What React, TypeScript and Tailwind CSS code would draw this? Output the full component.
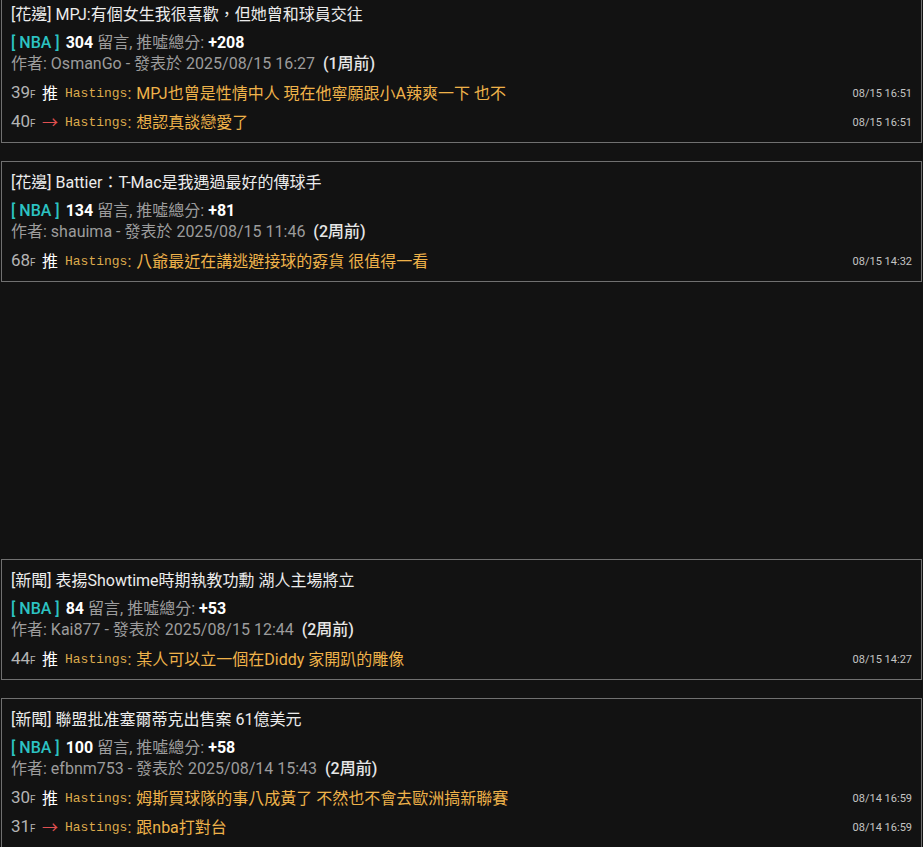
type Push = { floor: number; tag: "推" | "→"; user: string; text: string; time: string };
type Post = {
  title: string;
  board: string;
  count: number;
  score: string;
  author: string;
  date: string;
  ago: string;
  pushes: Push[];
};

const posts: Post[] = [
  {
    title: "[花邊] MPJ:有個女生我很喜歡，但她曾和球員交往",
    board: "NBA",
    count: 304,
    score: "+208",
    author: "OsmanGo",
    date: "2025/08/15 16:27",
    ago: "(1周前)",
    pushes: [
      { floor: 39, tag: "推", user: "Hastings", text: "MPJ也曾是性情中人 現在他寧願跟小A辣爽一下 也不", time: "08/15 16:51" },
      { floor: 40, tag: "→", user: "Hastings", text: "想認真談戀愛了", time: "08/15 16:51" },
    ],
  },
  {
    title: "[花邊] Battier：T-Mac是我遇過最好的傳球手",
    board: "NBA",
    count: 134,
    score: "+81",
    author: "shauima",
    date: "2025/08/15 11:46",
    ago: "(2周前)",
    pushes: [{ floor: 68, tag: "推", user: "Hastings", text: "八爺最近在講逃避接球的孬貨 很值得一看", time: "08/15 14:32" }],
  },
  {
    title: "[新聞] 表揚Showtime時期執教功勳 湖人主場將立",
    board: "NBA",
    count: 84,
    score: "+53",
    author: "Kai877",
    date: "2025/08/15 12:44",
    ago: "(2周前)",
    pushes: [{ floor: 44, tag: "推", user: "Hastings", text: "某人可以立一個在Diddy 家開趴的雕像", time: "08/15 14:27" }],
  },
  {
    title: "[新聞] 聯盟批准塞爾蒂克出售案 61億美元",
    board: "NBA",
    count: 100,
    score: "+58",
    author: "efbnm753",
    date: "2025/08/14 15:43",
    ago: "(2周前)",
    pushes: [
      { floor: 30, tag: "推", user: "Hastings", text: "姆斯買球隊的事八成黃了 不然也不會去歐洲搞新聯賽", time: "08/14 16:59" },
      { floor: 31, tag: "→", user: "Hastings", text: "跟nba打對台", time: "08/14 16:59" },
    ],
  },
];

function PushRow({ p }: { p: Push }) {
  return (
    <div className="flex h-[29px] items-center">
      <span className="w-[31px] shrink-0 text-[17px] text-[#b4b4b4]">
        {p.floor}
        <span className="text-[10px] uppercase">F</span>
      </span>
      {p.tag === "推" ? (
        <span className="w-[23px] shrink-0 text-white">推</span>
      ) : (
        <span className="w-[23px] shrink-0 text-[#e05050]">→</span>
      )}
      <span className="font-['Liberation_Mono',monospace] text-[13px] text-[#dcaa4c]">{p.user}</span>
      <span className="mr-[5px] text-[#e6b04c]">:</span>
      <span className="flex-1 truncate text-[#efb24a]">{p.text}</span>
      <span className="ml-2 shrink-0 text-[11px] text-[#c4c4c4]">{p.time}</span>
    </div>
  );
}

function PostCard({ post }: { post: Post }) {
  return (
    <div className="mx-[1px] w-[921px] border border-[#707070] px-[9px] pb-[5px] pt-[10px]">
      <div className="text-[#ececec]">{post.title}</div>
      <div className="mt-[7px]">
        <span className="font-medium text-[#2cc3c3]">[ {post.board} ]</span>{" "}
        <span className="ml-[2px] font-bold text-white">{post.count}</span>{" "}
        <span className="text-[#9c9c9c]">留言, 推噓總分:</span>{" "}
        <span className="font-bold text-white">{post.score}</span>
      </div>
      <div className="text-[#9c9c9c]">
        作者: {post.author} - 發表於 {post.date}{" "}
        <span className="ml-[4px] font-medium text-[#e6e6e6]">{post.ago}</span>
      </div>
      <div className="mt-[5px]">
        {post.pushes.map((p) => (
          <PushRow key={p.floor} p={p} />
        ))}
      </div>
    </div>
  );
}

export default function App() {
  return (
    <div className="h-[847px] overflow-hidden bg-[#121212] font-['Roboto','Noto_Sans_CJK_TC',sans-serif] text-[16px] leading-[21px]">
      <div className="-mt-[7px] flex flex-col gap-[18px]">
        <PostCard post={posts[0]} />
        <PostCard post={posts[1]} />
        <div className="h-[241px]" />
        <PostCard post={posts[2]} />
        <PostCard post={posts[3]} />
      </div>
    </div>
  );
}
